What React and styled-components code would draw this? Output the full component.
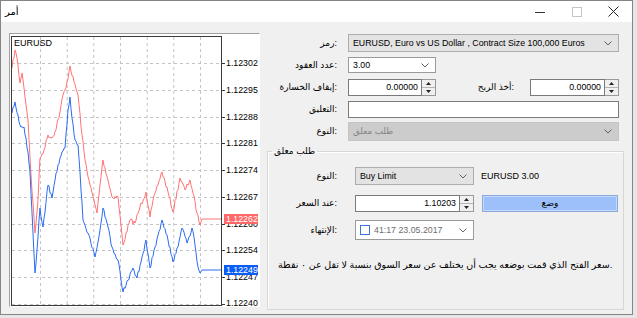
import React from "react";
import styled, { createGlobalStyle } from "styled-components";

const GlobalStyle = createGlobalStyle`
  html, body { margin: 0; padding: 0; background: #e6e6e6; }
  body { font-family: "Liberation Sans", "DejaVu Sans", sans-serif; color: #000; }
  * { box-sizing: border-box; }
`;

const Window = styled.div`
  width: 633px;
  height: 315px;
  border: 1px solid #858585;
  display: flex;
  flex-direction: column;
  background: #f0f0f0;
`;

const TitleBar = styled.div`
  height: 21px;
  background: #fff;
  display: flex;
  align-items: center;
  padding-left: 4px;
`;

const Title = styled.span`
  flex: 1;
  font-size: 10px;
  line-height: 12px;
`;

const Controls = styled.div`
  display: flex;
  height: 100%;
`;

const CtrlButton = styled.div`
  width: 37px;
  display: flex;
  align-items: center;
  justify-content: center;
`;

const Body = styled.div`
  flex: 1;
  display: flex;
  padding: 11px 0 4px 8px;
`;

const ChartPanel = styled.div`
  width: 251px;
  height: 274px;
  border-top: 1px solid #a0a0a0;
  border-left: 1px solid #a0a0a0;
  border-right: 1px solid #ffffff;
  border-bottom: 1px solid #ffffff;
  background: #fff;
  display: flex;
`;

const FormPanel = styled.div`
  width: 357px;
  margin-left: 7px;
  margin-top: 1px;
  display: flex;
  flex-direction: column;
`;

const TopGrid = styled.div`
  display: grid;
  grid-template-columns: 81px 271px;
  grid-auto-rows: 18px;
  row-gap: 4px;
  align-items: center;
`;

const Label = styled.div`
  text-align: right;
  padding-right: 11px;
  font-size: 9px;
  white-space: nowrap;
`;

const InlineLabel = styled.div`
  font-size: 9px;
  white-space: nowrap;
`;

const Combo = styled.div`
  display: flex;
  align-items: center;
  height: ${(p) => p.$h || 18}px;
  width: ${(p) => (p.$w ? `${p.$w}px` : "auto")};
  border: 1px solid ${(p) => (p.$variant === "disabled" ? "#c4c4c4" : p.$variant === "white" ? "#9a9a9a" : "#adadad")};
  background: ${(p) => (p.$variant === "gray" ? "#e3e3e3" : p.$variant === "disabled" ? "#cccccc" : "#ffffff")};
  color: ${(p) => (p.$variant === "disabled" ? "#858585" : "#000")};
  padding: 0 6px 0 4px;
  font-size: 8.8px;
  white-space: nowrap;
`;

const ComboText = styled.span`
  flex: 1;
  overflow: hidden;
`;

const Chevron = () => (
  <svg width="8" height="5" viewBox="0 0 8 5">
    <polyline points="0.5,0.5 4,4 7.5,0.5" fill="none" stroke="#606060" strokeWidth="1" />
  </svg>
);

const SpinBox = styled.div`
  display: flex;
  width: ${(p) => p.$w}px;
  height: 17px;
`;

const NumField = styled.div`
  flex: 1;
  border: 1px solid #7a7a7a;
  background: #fff;
  text-align: right;
  padding-right: 3px;
  font-size: 8.8px;
  line-height: 15px;
`;

const Spin = styled.div`
  width: 14px;
  border: 1px solid #9a9a9a;
  border-left: none;
  background: #f0f0f0;
  display: flex;
  flex-direction: column;
`;

const SpinHalf = styled.div`
  flex: 1;
  display: flex;
  align-items: center;
  justify-content: center;
  & + & {
    border-top: 1px solid #b5b5b5;
  }
`;

const Arrow = ({ up }) => (
  <svg width="5" height="3" viewBox="0 0 5 3">
    <polygon points={up ? "0,3 5,3 2.5,0" : "0,0 5,0 2.5,3"} fill="#222" />
  </svg>
);

const SpinInput = ({ w, value }) => (
  <SpinBox $w={w}>
    <NumField>{value}</NumField>
    <Spin>
      <SpinHalf>
        <Arrow up />
      </SpinHalf>
      <SpinHalf>
        <Arrow />
      </SpinHalf>
    </Spin>
  </SpinBox>
);

const TextField = styled.div`
  height: 17px;
  border: 1px solid #7a7a7a;
  background: #fff;
`;

const StopRow = styled.div`
  display: flex;
  align-items: center;
`;

const TakeProfit = styled.div`
  flex: 1;
  display: flex;
  align-items: center;
  justify-content: flex-end;
  gap: 16px;
`;

const Group = styled.fieldset`
  margin: 6px 0 0 0;
  flex: 1;
  border: 1px solid #d7d7d7;
  box-shadow: inset 1px 1px 0 #ffffff;
  padding: 9px 0 0 0;
  min-width: 0;
`;

const Legend = styled.legend`
  margin-left: 4px;
  padding: 0 2px;
  font-size: 9px;
  line-height: 11px;
`;

const GroupGrid = styled.div`
  display: grid;
  grid-template-columns: 80px 119px 137px;
  grid-auto-rows: 20px;
  column-gap: 7px;
  row-gap: 7px;
  align-items: center;
`;

const PlaceButton = styled.div`
  height: 17px;
  margin-left: 1px;
  border: 1px solid #8aa9d6;
  box-shadow: inset 0 0 0 1px #c4d9fb;
  background: #9dc0fb;
  display: flex;
  align-items: center;
  justify-content: center;
  font-size: 9px;
`;

const CheckBox = styled.span`
  width: 10px;
  height: 10px;
  border: 1px solid #3c78d8;
  background: #fff;
  margin-right: 4px;
  flex: none;
`;

const DateText = styled.span`
  width: 74px;
  overflow: hidden;
  color: #6d6d6d;
  margin-right: 12px;
`;

const Note = styled.div`
  margin-top: 19px;
  padding-left: 10px;
  font-size: 9.5px;
  line-height: 12px;
  white-space: nowrap;
`;

/* ---------- chart drawing ---------- */
function rng(seed) {
  let s = seed;
  return () => {
    s = (s * 16807) % 2147483647;
    return s / 2147483647;
  };
}

function jag(points, seed, amp) {
  const r = rng(seed);
  const out = [];
  for (let i = 0; i < points.length - 1; i++) {
    const [x0, y0] = points[i];
    const [x1, y1] = points[i + 1];
    const n = Math.max(1, Math.round(x1 - x0));
    for (let k = 0; k < n; k++) {
      const t = k / n;
      const x = x0 + (x1 - x0) * t;
      let y = y0 + (y1 - y0) * t;
      if (k > 0 && x < 201) y += (r() - 0.5) * amp * 2;
      out.push([x, y]);
    }
  }
  out.push(points[points.length - 1]);
  return out.map(([x, y]) => `${x.toFixed(1)},${y.toFixed(1)}`).join(" ");
}

const redKeys = [
  [12, 68], [15, 50], [17, 58], [20, 83], [22, 73], [24, 88], [28, 120], [31, 175], [35, 233],
  [38, 200], [40, 158], [44, 150], [48, 135], [52, 138], [55, 132], [60, 112], [63, 95],
  [66, 88], [70, 66], [74, 82], [78, 95], [82, 135], [85, 160], [90, 185], [95, 205], [97, 213],
  [100, 185], [103, 160], [108, 180], [112, 197], [118, 197], [123, 245], [130, 220], [135, 223],
  [140, 207], [146, 192], [150, 217], [155, 193], [162, 172], [168, 192], [173, 212], [180, 178],
  [185, 190], [190, 180], [193, 193], [197, 213], [200, 225], [202, 219], [222, 219],
];

const blueKeys = [
  [12, 113], [15, 102], [18, 115], [20, 125], [24, 127], [28, 152], [30, 172], [33, 233],
  [35, 273], [37, 250], [40, 208], [43, 227], [48, 185], [52, 198], [55, 180], [58, 165],
  [62, 152], [65, 148], [68, 110], [70, 97], [72, 118], [75, 140], [78, 145], [80, 172],
  [83, 220], [88, 233], [95, 257], [100, 230], [103, 208], [108, 227], [112, 247], [118, 260],
  [123, 292], [128, 280], [133, 268], [137, 278], [142, 257], [146, 240], [150, 268], [155, 247],
  [162, 220], [168, 240], [173, 262], [178, 247], [182, 228], [187, 243], [192, 228], [195, 245],
  [198, 267], [200, 273], [202, 270], [222, 270],
];

const gridY = [63, 89.8, 116.6, 143.3, 170.1, 196.9, 223.7, 250.4, 277.2, 304];
const gridLabels = ["1.12302", "1.12295", "1.12288", "1.12281", "1.12274", "1.12267", "1.12260", "1.12254", "1.12247", "1.12240"];
const gridX = [40, 66.7, 93.3, 120, 146.7, 173.3, 200];

const PriceChart = () => {
  const red = jag(redKeys, 7, 2.2);
  const blue = jag(blueKeys, 13, 2.2);
  return (
    <svg width="249" height="272" viewBox="10 34 249 272" style={{ display: "block" }}>
      <rect x="10" y="34" width="249" height="272" fill="#fff" />
      {gridX.map((x) => (
        <line key={x} x1={x + 0.5} y1="37" x2={x + 0.5} y2="305" stroke="#c4c4c4" strokeDasharray="3 3" />
      ))}
      {gridY.map((y) => (
        <line key={y} x1="12" y1={Math.round(y) + 0.5} x2="221" y2={Math.round(y) + 0.5} stroke="#c4c4c4" strokeDasharray="3 3" />
      ))}
      <polyline points={red} fill="none" stroke="#ff7373" strokeWidth="1" />
      <polyline points={blue} fill="none" stroke="#2a6cf4" strokeWidth="1" />
      <rect x="11.5" y="36.5" width="210" height="269" fill="none" stroke="#3a3a3a" strokeWidth="1" />
      <text x="14" y="46" fontSize="9" fontFamily="Liberation Sans, sans-serif" fill="#000">EURUSD</text>
      {gridY.map((y, i) => (
        <g key={i}>
          <line x1="222" y1={Math.round(y) + 0.5} x2="225" y2={Math.round(y) + 0.5} stroke="#3a3a3a" />
          <text x="226" y={Math.min(y + 3, 305.5)} fontSize="8.8" fontFamily="Liberation Sans, sans-serif" fill="#000">
            {gridLabels[i]}
          </text>
        </g>
      ))}
      <rect x="224" y="214" width="34" height="10" fill="#ff6868" />
      <text x="226" y="222.2" fontSize="8.8" fontFamily="Liberation Sans, sans-serif" fill="#fff">1.12262</text>
      <rect x="224" y="265" width="34" height="10" fill="#0b5ef5" />
      <text x="226" y="273.2" fontSize="8.8" fontFamily="Liberation Sans, sans-serif" fill="#fff">1.12249</text>
    </svg>
  );
};

export default function App() {
  return (
    <>
      <GlobalStyle />
      <Window>
        <TitleBar>
          <Title>أمر</Title>
          <Controls>
            <CtrlButton>
              <svg width="10" height="10" viewBox="0 0 10 10">
                <line x1="0" y1="5.5" x2="10" y2="5.5" stroke="#333" />
              </svg>
            </CtrlButton>
            <CtrlButton>
              <svg width="10" height="10" viewBox="0 0 10 10">
                <rect x="0.5" y="0.5" width="9" height="9" fill="none" stroke="#c4c4c4" />
              </svg>
            </CtrlButton>
            <CtrlButton>
              <svg width="11" height="11" viewBox="0 0 11 11">
                <path d="M0.5 0.5 L10.5 10.5 M10.5 0.5 L0.5 10.5" stroke="#222" strokeWidth="1" />
              </svg>
            </CtrlButton>
          </Controls>
        </TitleBar>
        <Body>
          <ChartPanel>
            <PriceChart />
          </ChartPanel>
          <FormPanel>
            <TopGrid>
              <Label>رمز:</Label>
              <Combo $variant="gray">
                <ComboText>EURUSD, Euro vs US Dollar , Contract Size 100,000 Euros</ComboText>
                <Chevron />
              </Combo>

              <Label>عدد العقود:</Label>
              <Combo $variant="white" $w={88} $h={16}>
                <ComboText>3.00</ComboText>
                <Chevron />
              </Combo>

              <Label>إيقاف الخسارة:</Label>
              <StopRow>
                <SpinInput w={88} value="0.00000" />
                <TakeProfit>
                  <InlineLabel>أخذ الربح:</InlineLabel>
                  <SpinInput w={89} value="0.00000" />
                </TakeProfit>
              </StopRow>

              <Label>التعليق:</Label>
              <TextField />

              <Label>النوع:</Label>
              <Combo $variant="disabled" $h={19}>
                <ComboText>طلب معلق</ComboText>
                <Chevron />
              </Combo>
            </TopGrid>

            <Group>
              <Legend>طلب معلق</Legend>
              <GroupGrid>
                <Label>النوع:</Label>
                <Combo $variant="gray">
                  <ComboText>Buy Limit</ComboText>
                  <Chevron />
                </Combo>
                <InlineLabel>EURUSD 3.00</InlineLabel>

                <Label>عند السعر:</Label>
                <SpinInput w={119} value="1.10203" />
                <PlaceButton>وضع</PlaceButton>

                <Label>الإنتهاء:</Label>
                <Combo $variant="white" $h={20}>
                  <CheckBox />
                  <DateText>41:17 23.05.2017</DateText>
                  <Chevron />
                </Combo>
                <span />
              </GroupGrid>
              <Note>سعر الفتح الذي قمت بوضعه يجب أن يختلف عن سعر السوق بنسبة لا تقل عن ٠ نقطة.</Note>
            </Group>
          </FormPanel>
        </Body>
      </Window>
    </>
  );
}
